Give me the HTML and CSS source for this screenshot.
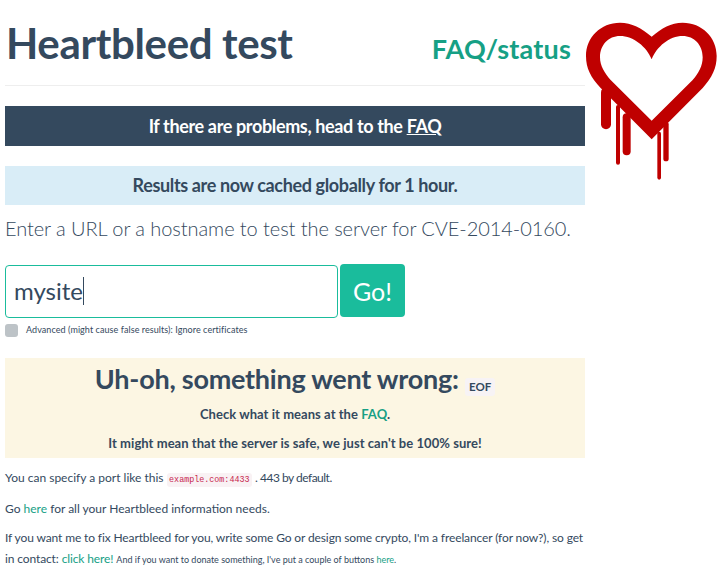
FILE: index.html
```html
<!DOCTYPE html>
<html lang="en">
<head>
<meta charset="utf-8">
<title>Heartbleed test</title>
<link rel="stylesheet" href="styles.css">
</head>
<body>
<div class="page">
  <main class="main">
    <header class="header">
      <h1 class="title">Heartbleed test</h1>
      <a class="faq-link" href="#">FAQ/status</a>
    </header>
    <div class="alert alert-dark">If there are problems, head to the <a href="#">FAQ</a></div>
    <div class="alert alert-info">Results are now cached globally for 1 hour.</div>
    <p class="lead">Enter a URL or a hostname to test the server for CVE-2014-0160.</p>
    <form class="search">
      <div class="input">mysite<span class="caret"></span></div>
      <button class="go" type="button">Go!</button>
    </form>
    <div class="advanced">
      <span class="check"></span>
      <span class="advanced-label">Advanced (might cause false results): Ignore certificates</span>
    </div>
    <section class="result">
      <h2 class="result-title">Uh-oh, something went wrong: <code class="eof">EOF</code></h2>
      <p class="result-line">Check what it means at the <a href="#">FAQ</a>.</p>
      <p class="result-line">It might mean that the server is safe, we just can't be 100% sure!</p>
    </section>
    <p class="note">You can specify a port like this <code class="code">example.com:4433</code> <span class="tail">. 443 by default.</span></p>
    <p class="note">Go <a href="#">here</a> for all your Heartbleed information needs.</p>
    <p class="note note-tight">If you want me to fix Heartbleed for you, write some Go or design some crypto, I'm a freelancer (for now?), so get in contact: <a href="#">click here!</a> <small class="small">And if you want to donate something, I've put a couple of buttons <a href="#">here</a>.</small></p>
  </main>
  <aside class="logo">
    <svg width="131" height="158" viewBox="48 66 393 474" aria-label="Heartbleed logo">
      <path fill="#bf0000" fill-rule="evenodd" d="M245 110C215 84 185 68 150 68C92 68 48 112 48 168C48 205 62 232 92 264L245 418L398 264C426 232 440 205 440 168C440 112 396 68 338 68C303 68 275 84 245 110ZM245 178C230 140 190 108 150 108C115 108 90 135 90 172C90 198 104 220 122 240L245 362L368 240C386 220 398 198 398 172C398 135 373 108 338 108C298 108 260 140 245 178Z"/>
      <rect class="drip" x="93" y="262" width="30" height="126" rx="15"/>
      <rect class="drip" x="138" y="315" width="12" height="179" rx="6"/>
      <rect class="drip" x="158" y="340" width="24" height="126" rx="12"/>
      <rect class="drip" x="262" y="395" width="11" height="144" rx="5.5"/>
      <rect class="drip" x="280" y="365" width="16" height="119" rx="8"/>
    </svg>
  </aside>
</div>
</body>
</html>
```
FILE: styles.css
```css
* { box-sizing: border-box; }
html, body { margin: 0; padding: 0; background: #fff; }
body {
  font-family: Lato, "Open Sans", sans-serif;
  color: #34495e;
  overflow: hidden;
}
a { color: #16a085; text-decoration: none; }
.page { display: flex; align-items: flex-start; padding: 0 0 0 5px; }
.main { width: 580px; flex: none; }
.logo { flex: none; margin: 22px 0 0 1px; line-height: 0; }
.drip { fill: #bf0000; }

.header {
  display: flex;
  justify-content: space-between;
  align-items: baseline;
  height: 86px;
  padding: 16px 14px 0 1px;
  border-bottom: 1px solid #eee;
}
.title { margin: 0; font-size: 42px; line-height: 54px; font-weight: 700; letter-spacing: -0.35px; }
.faq-link { font-size: 27px; font-weight: 700; color: #16a085; letter-spacing: 0.2px; }

.alert { text-align: center; font-weight: 700; font-size: 18px; line-height: 24px; letter-spacing: -0.36px; }
.alert-dark { margin-top: 20px; height: 40px; padding-top: 8px; background: #34495e; color: #fff; }
.alert-dark a { color: #fff; text-decoration: underline; }
.alert-info { margin-top: 20px; height: 39px; padding-top: 7px; background: #d9edf7; color: #34495e; }

.lead { margin: 11px 0 0; font-size: 20px; line-height: 24px; font-weight: 300; white-space: nowrap; letter-spacing: -0.07px; }

.search { display: flex; gap: 2px; margin-top: 24px; align-items: flex-start; }
.input {
  width: 333px;
  height: 53px;
  margin-top: 1px;
  padding: 0 8px 2px;
  border: 1px solid #1abc9c;
  border-radius: 4px;
  font-size: 24px;
  line-height: 50px;
  display: flex;
  align-items: center;
}
.caret { display: block; width: 1px; height: 28px; background: #34495e; }
.go {
  width: 65px;
  height: 53px;
  padding: 0;
  border: 0;
  border-radius: 4px;
  background: #1abc9c;
  color: #fff;
  font: 400 25px Lato, sans-serif;
}
.advanced { display: flex; align-items: flex-start; gap: 8px; margin-top: 6px; height: 14px; }
.check { width: 13px; height: 13px; background: #bdc3c7; border-radius: 3px; }
.advanced-label { font-size: 9px; line-height: 12px; white-space: nowrap; letter-spacing: 0.07px; }

.result { margin: 20px 0 1px; height: 100px; background: #fcf6e3; text-align: center; font-weight: 700; }
.result-title { margin: 0; padding-top: 4px; font-size: 27px; line-height: 33px; font-weight: 700; letter-spacing: -0.25px; }
.eof {
  display: inline-block;
  padding: 0 4px;
  background: #f7f3f5;
  border-radius: 3px;
  font-family: Lato, sans-serif;
  font-size: 11.5px;
  line-height: 18px;
  font-weight: 700;
  letter-spacing: 0;
  vertical-align: -2px;
}
.result-line { margin: 0; font-size: 13px; line-height: 20px; letter-spacing: 0.05px; }
.result-title + .result-line { padding-top: 8px; }
.result-line + .result-line { padding-top: 9px; }

.note { margin: 0; font-size: 12px; line-height: 20px; padding-top: 9px; }
.tail { letter-spacing: -0.5px; }
.note-tight { letter-spacing: -0.12px; line-height: 21px; padding-top: 8px; }
.code {
  padding: 2px 2.5px;
  background: #f9f2f4;
  color: #c7254e;
  border-radius: 3px;
  font-family: "Liberation Mono", monospace;
  font-size: 8.4px;
}
.small { font-size: 9px; letter-spacing: 0; }
```
